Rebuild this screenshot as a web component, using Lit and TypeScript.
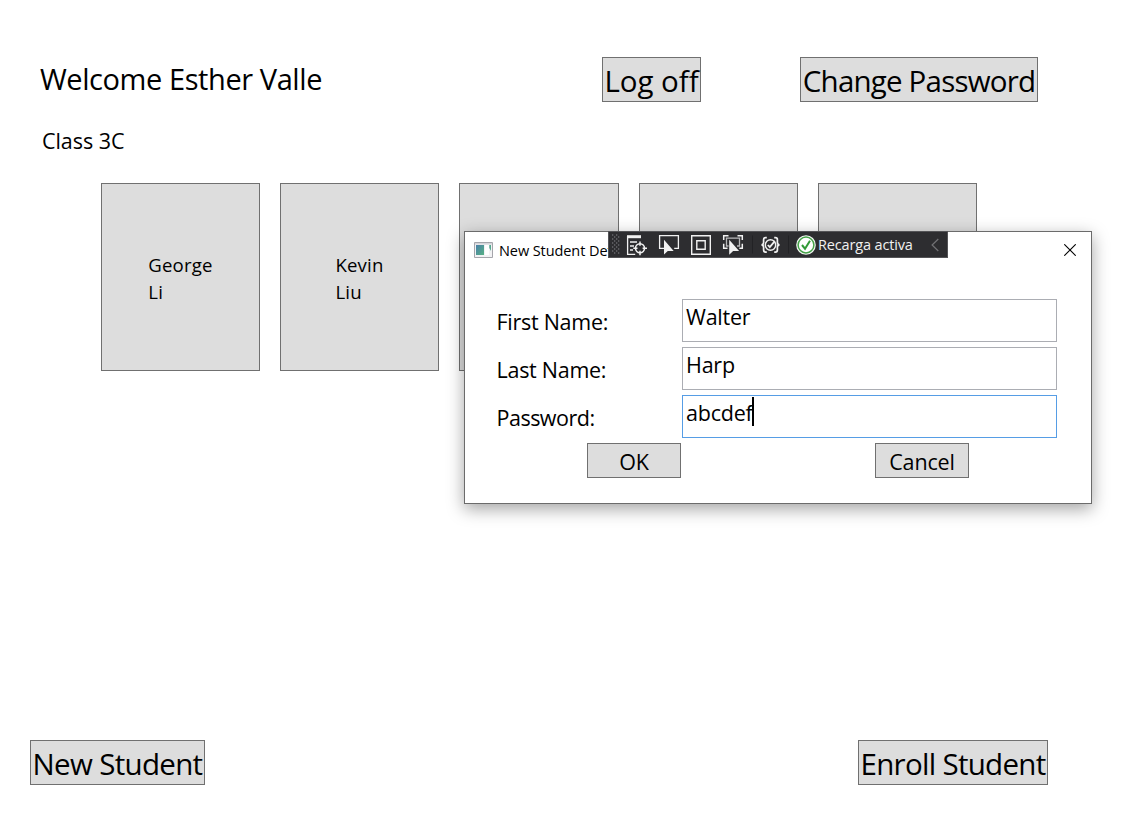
import { LitElement, html, css, svg } from "lit";
import { customElement } from "lit/decorators.js";

@customElement("debug-toolbar")
class DebugToolbar extends LitElement {
  static styles = css`
    :host {
      display: flex;
      align-items: flex-start;
      box-sizing: border-box;
      width: 340px;
      height: 27px;
      background: #2d2d30;
      border: 1px solid #535356;
      color: #f1f1f1;
      font: 14.5px/25px "Open Sans", "Noto Sans", sans-serif;
    }
    svg { display: block; flex: none; }
    .label { width: 96px; margin-left: 1px; letter-spacing: -0.15px; white-space: nowrap; }
    .chevron { margin-left: 15px; }
  `;
  render() {
    return html`
      <svg width="208" height="25" viewBox="609 232 208 25" fill="none" stroke="#f1f1f1" stroke-width="1.3">
        ${[235, 239, 243, 247, 251].map((y) => svg`<path d="M612 ${y}h1.3M616 ${y}h1.3M614 ${y + 2}h1.3M618 ${y + 2}h1.3" stroke="#68686c" />`)}
        <path d="M627 236.7h14" stroke-width="3" />
        <path d="M627.6 236v18.4h7.6" />
        <path d="M630 242h7M630 246h4M630 250h3" />
        <circle cx="640" cy="248.2" r="4.5" stroke-width="1.6" />
        <path d="M640 241.5v4.2M640 250.8v4.5M633.3 248.2h4.2M642.6 248.2h4.4" stroke-width="1.5" />
        <path d="M664 248.4h-4.4v-12.8h18.8v12.8h-4.2" />
        <path d="M664 239.8v14.8l3.8-3.7h5.9z" fill="#f1f1f1" stroke="none" />
        <path d="M691.7 235.7h18.6v18.6h-18.6zM696.8 240.8h8.4v8.4h-8.4z" stroke-width="1.4" />
        <path d="M723.7 240v-4.3h4.8M737.5 235.7h4.8v4.3M742.3 243.8v4.5h-3M723.7 243.8v4.5h3.8" stroke-width="1.5" />
        <path d="M728.5 246h-2v-7.8h13v7.8h-2.5" stroke="#b9b9bb" />
        <path d="M729.2 239.7v15l3.9-3.8h6z" fill="#f1f1f1" stroke="none" />
        <path d="M752.5 235.5v18M788.5 235.5v18" stroke="#222225" stroke-width="1" />
        <path d="M766.8 237.7h-1.2q-2 0-2 2v2.7q0 2-2 2.4q2 .4 2 2.4v2.9q0 2 2 2h1.2M774.2 237.7h1.2q2 0 2 2v2.7q0 2 2 2.4q-2 .4-2 2.4v2.9q0 2-2 2h-1.2" stroke-width="1.7" />
        <circle cx="770.5" cy="245" r="5.2" stroke-width="1.5" />
        <path d="M767.8 245l2 2.2 5-6" stroke-width="1.8" />
        <circle cx="806" cy="245" r="9.8" fill="#f4f8f4" stroke="none" />
        <circle cx="806" cy="245" r="7.9" fill="#fff" stroke="#45a249" stroke-width="1.5" />
        <path d="M802 245l3 3.7 5-8" stroke="#329a38" stroke-width="2" />
      </svg>
      <span class="label">Recarga activa</span>
      <svg class="chevron" width="12" height="25" viewBox="929 232 12 25" fill="none" stroke="#717174" stroke-width="1.2">
        <path d="M938.3 239l-6.2 6 6.2 6" />
      </svg>
    `;
  }
}

@customElement("student-dialog")
class StudentDialog extends LitElement {
  static styles = css`
    :host {
      display: block;
      box-sizing: border-box;
      width: 628px;
      height: 273px;
      background: #fff;
      border: 1px solid #6b6b6b;
      box-shadow: 0 5px 16px rgba(0, 0, 0, 0.36);
      font-size: 21.5px;
    }
    .titlebar { display: flex; height: 36px; padding: 0 15px 0 9px; align-items: center; box-sizing: border-box; }
    .title { margin-left: 6px; white-space: nowrap; font-size: 14.5px; letter-spacing: -0.08px; line-height: 24px; padding-top: 1px; }
    .close { margin-left: auto; }
    svg { display: block; }
    .form { display: grid; grid-template-columns: 185.5px 375px; row-gap: 5px; padding: 31px 0 0 31.5px; }
    .name { height: 43px; line-height: 45px; letter-spacing: -0.27px; white-space: nowrap; }
    .name.focus { letter-spacing: -0.5px; }
    .field { display: flex; box-sizing: border-box; height: 43px; padding: 0 3px; border: 1px solid #abadb3; line-height: 34px; letter-spacing: -0.22px; }
    .field.focus { border-color: #569de5; }
    .caret { width: 2px; height: 29px; margin: 1px 0 0 -0.4px; background: #000; }
    .actions { display: flex; justify-content: space-between; padding: 5px 122px 0 122px; }
    .action { box-sizing: border-box; width: 94px; height: 35px; border: 1px solid #707070; background: #ddd; text-align: center; line-height: 36px; letter-spacing: -0.15px; }
  `;
  fields = [
    { name: "First Name:", value: "Walter" },
    { name: "Last Name:", value: "Harp" },
    { name: "Password:", value: "abcdef", focused: true },
  ];
  render() {
    return html`
      <div class="titlebar">
        <svg width="19" height="16" viewBox="0 0 19 16">
          <defs><linearGradient id="pane" x2="1" y2="1"><stop stop-color="#4a7fa8" /><stop offset="1" stop-color="#57b184" /></linearGradient></defs>
          <path d="M.5.5h18v15H.5z" fill="#f2f2f4" stroke="#a5a5ab" />
          <path d="M1 1h17v1.5H1z" fill="#d5d5da" />
          <path d="M2 3h8v10H2z" fill="url(#pane)" />
          <path d="M11 3h4v10H11z" fill="#fff" />
          <path d="M15.3 3h1.7v6l-1.7-3z" fill="#55a78d" />
        </svg>
        <span class="title">New Student Det</span>
        <svg class="close" width="12" height="12" viewBox="0 0 12 12"><path d="M.3.3l11.4 11.4M11.7.3L.3 11.7" stroke="#000" stroke-width="1.1" /></svg>
      </div>
      <div class="form">
        ${this.fields.map((f) => html`
          <span class="name ${f.focused ? "focus" : ""}">${f.name}</span>
          <div class="field ${f.focused ? "focus" : ""}"><span>${f.value}</span>${f.focused ? html`<i class="caret"></i>` : ""}</div>
        `)}
      </div>
      <div class="actions"><div class="action">OK</div><div class="action">Cancel</div></div>
    `;
  }
}

@customElement("app-root")
class AppRoot extends LitElement {
  static styles = css`
    :host {
      display: flex;
      flex-direction: column;
      position: relative;
      box-sizing: border-box;
      width: 1147px;
      height: 838px;
      overflow: hidden;
      background: #fff;
      color: #000;
      font-family: "Open Sans", "Noto Sans", sans-serif;
    }
    .header { display: flex; padding: 57px 0 0 40px; height: 45px; }
    .welcome { width: 562px; font-size: 29px; line-height: 44px; letter-spacing: -0.42px; }
    .button { display: flex; justify-content: center; box-sizing: border-box; height: 45px; border: 1px solid #707070; background: #ddd; font-size: 29.5px; line-height: 46px; white-space: nowrap; }
    .logoff { width: 99px; margin-right: 99px; letter-spacing: -0.05px; }
    .change { width: 238px; letter-spacing: -0.8px; }
    .class-name { padding: 24px 0 0 42px; font-size: 21.5px; line-height: 30px; letter-spacing: -0.05px; }
    .cards { display: grid; grid-template-columns: 159px 159px 160px 159px 159px; column-gap: 20px; padding: 27px 0 0 101px; }
    .card { display: flex; align-items: center; justify-content: center; box-sizing: border-box; height: 188px; padding-top: 2px; border: 1px solid #707070; background: #ddd; font-size: 18.6px; line-height: 27px; letter-spacing: 0.2px; }
    .footer { display: flex; justify-content: space-between; margin-top: auto; padding: 0 99px 53px 30px; }
    .new { width: 175px; letter-spacing: -0.68px; }
    .enroll { width: 190px; letter-spacing: -0.7px; }
    .dialog { position: absolute; left: 464px; top: 231px; }
    .toolbar { position: absolute; left: 608px; top: 231px; }
  `;
  students = [["George", "Li"], ["Kevin", "Liu"], [], [], []];
  render() {
    return html`
      <div class="header">
        <div class="welcome">Welcome Esther Valle</div>
        <div class="button logoff">Log off</div>
        <div class="button change">Change Password</div>
      </div>
      <div class="class-name">Class 3C</div>
      <div class="cards">
        ${this.students.map(([first, last]) => html`<div class="card"><div>${first}<br />${last}</div></div>`)}
      </div>
      <div class="footer">
        <div class="button new">New Student</div>
        <div class="button enroll">Enroll Student</div>
      </div>
      <student-dialog class="dialog"></student-dialog>
      <debug-toolbar class="toolbar"></debug-toolbar>
    `;
  }
}
